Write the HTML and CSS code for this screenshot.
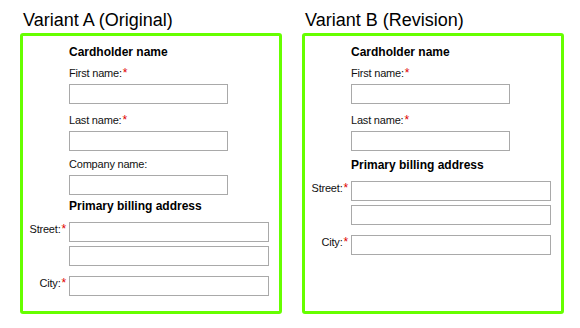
FILE: index.html
```html
<!DOCTYPE html>
<html lang="en">
<head>
    <meta charset="UTF-8">
    <meta name="viewport" content="width=device-width, initial-scale=1.0">
    <title>Billing form variants</title>
    <link rel="stylesheet" href="styles.css">
</head>
<body>
    <div class="compare">
        <section class="variant">
            <h2 class="variant-title">Variant A (Original)</h2>
            <div class="panel">
                <div class="form">
                    <h3 class="legend">Cardholder name</h3>
                    <label class="stack req">First name:<span class="ast">*</span></label>
                    <input type="text" class="short">
                    <label class="stack req after">Last name:<span class="ast">*</span></label>
                    <input type="text" class="short">
                    <label class="stack after">Company name:</label>
                    <input type="text" class="short">
                    <h3 class="legend second">Primary billing address</h3>
                    <label class="side">Street:<span class="ast">*</span></label>
                    <input type="text" class="wide">
                    <input type="text" class="wide extra">
                    <label class="side spaced">City:<span class="ast">*</span></label>
                    <input type="text" class="wide spaced">
                </div>
            </div>
        </section>
        <section class="variant">
            <h2 class="variant-title">Variant B (Revision)</h2>
            <div class="panel">
                <div class="form">
                    <h3 class="legend">Cardholder name</h3>
                    <label class="stack req">First name:<span class="ast">*</span></label>
                    <input type="text" class="short">
                    <label class="stack req after">Last name:<span class="ast">*</span></label>
                    <input type="text" class="short">
                    <h3 class="legend second revised">Primary billing address</h3>
                    <label class="side">Street:<span class="ast">*</span></label>
                    <input type="text" class="wide">
                    <input type="text" class="wide extra">
                    <label class="side spaced">City:<span class="ast">*</span></label>
                    <input type="text" class="wide spaced">
                </div>
            </div>
        </section>
    </div>
</body>
</html>
```

FILE: styles.css
```css
body {
    margin: 0;
    font-family: "Liberation Sans", Arial, sans-serif;
    color: #000;
    background: #fff;
}

.compare {
    display: flex;
    gap: 20px;
    padding: 10px 0 0 20px;
}

.variant {
    width: 262px;
}

.variant-title {
    margin: 0 0 3px;
    padding-left: 3px;
    font-size: 18px;
    line-height: 20px;
    font-weight: normal;
}

.panel {
    box-sizing: border-box;
    height: 281px;
    border: 3px solid #66ff00;
    border-radius: 3px;
    padding-top: 9px;
}

.form {
    display: grid;
    grid-template-columns: 43px 1fr;
    column-gap: 3px;
    align-items: start;
}

.legend {
    grid-column: 2;
    margin: 0;
    font-size: 12px;
    line-height: 15px;
    font-weight: bold;
}

.legend.second {
    margin-top: 4px;
    margin-bottom: 8px;
}

.legend.revised {
    margin-top: 7px;
}

label {
    font-size: 11px;
    line-height: 14px;
    letter-spacing: -0.2px;
    color: #111;
}

.stack {
    grid-column: 2;
    margin-top: 6px;
    margin-bottom: 4px;
}

.stack.req.after {
    margin-top: 9px;
}

.side {
    grid-column: 1;
    justify-self: end;
    white-space: nowrap;
}

.ast {
    color: #e00000;
    font-size: 12px;
    line-height: 12px;
    margin-left: 1px;
}

input {
    grid-column: 2;
    justify-self: start;
    box-sizing: border-box;
    height: 20px;
    margin: 0;
    padding: 0 3px;
    border: 1px solid #a9a9a9;
    background: #fff;
    font: 11px "Liberation Sans", Arial, sans-serif;
}

.short {
    width: 159px;
}

.wide {
    width: 200px;
}

.extra {
    margin-top: 4px;
}

.spaced {
    margin-top: 10px;
}
```
